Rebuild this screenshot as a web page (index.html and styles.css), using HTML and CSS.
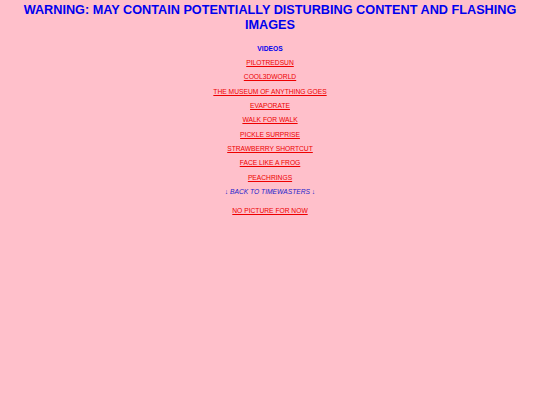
FILE: index.html
```html
<!DOCTYPE html>
<html>
<head>
<meta charset="utf-8">
<link rel="stylesheet" href="styles.css">
</head>
<body>
<h1 class="warning">WARNING: MAY CONTAIN POTENTIALLY DISTURBING CONTENT AND FLASHING IMAGES</h1>
<div class="menu">
  <div class="heading">VIDEOS</div>
  <a class="link" href="#">PILOTREDSUN</a>
  <a class="link" href="#">COOL3DWORLD</a>
  <a class="link" href="#">THE MUSEUM OF ANYTHING GOES</a>
  <a class="link" href="#">EVAPORATE</a>
  <a class="link" href="#">WALK FOR WALK</a>
  <a class="link" href="#">PICKLE SURPRISE</a>
  <a class="link" href="#">STRAWBERRY SHORTCUT</a>
  <a class="link" href="#">FACE LIKE A FROG</a>
  <a class="link" href="#">PEACHRINGS</a>
  <a class="back" href="#">↓ BACK TO TIMEWASTERS ↓</a>
  <a class="link nopic" href="#">NO PICTURE FOR NOW</a>
</div>
</body>
</html>
```
FILE: styles.css
```css
html, body {
  background: #ffc0cb;
}
body {
  margin: 0;
  padding: 3.1px 8px;
  font-family: "Liberation Sans", Arial, sans-serif;
}
.warning {
  margin: 0;
  text-align: center;
  color: #0000ee;
  font-size: 12.7px;
  line-height: 15px;
  font-weight: bold;
}
.menu {
  display: flex;
  flex-direction: column;
  align-items: center;
  margin-top: 8.6px;
  font-size: 6.7px;
  line-height: 14.35px;
}
.heading {
  color: #0000ee;
  font-weight: bold;
}
.link {
  color: #ee0000;
  text-decoration: underline;
}
.back {
  color: #2222cc;
  font-style: italic;
  text-decoration: none;
}
.nopic {
  margin-top: 4.5px;
}
```
